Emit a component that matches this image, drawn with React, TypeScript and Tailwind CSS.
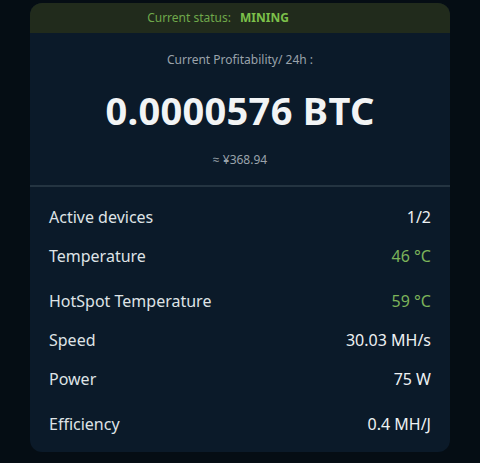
const rows = [
  { label: "Active devices", value: "1/2" },
  { label: "Temperature", value: "46 °C", green: true, groupEnd: true },
  { label: "HotSpot Temperature", value: "59 °C", green: true },
  { label: "Speed", value: "30.03 MH/s" },
  { label: "Power", value: "75 W", groupEnd: true },
  { label: "Efficiency", value: "0.4 MH/J" },
];

export default function App() {
  return (
    <div
      className="min-h-[463px] bg-[#050d14] px-[30px] pt-[3px]"
      style={{ fontFamily: '"Noto Sans", "Open Sans", sans-serif' }}
    >
      <div className="rounded-[12px] bg-[#0b1a29] overflow-hidden">
        {/* status bar */}
        <div className="h-[30px] bg-[#212b1c] flex items-center justify-center gap-[9px] pr-[44px] text-[12px]">
          <span className="text-[#6fa84b]">Current status:</span>
          <span className="text-[#7cc04a] font-bold">MINING</span>
        </div>

        {/* profitability */}
        <div className="h-[154px] border-b-2 border-[#243441] flex flex-col items-center">
          <div className="mt-[18px] text-[12px] text-[#9aa3ab]">Current Profitability/ 24h :</div>
          <div className="mt-[18px] text-[38px] leading-[46px] font-bold text-[#f2f4f5] tracking-[0.3px]">
            0.0000576 BTC
          </div>
          <div className="mt-[18px] text-[12px] text-[#9aa3ab]">≈ ¥368.94</div>
        </div>

        {/* stats */}
        <div className="px-[19px] pt-[10px] pb-[9px]">
          {rows.map((r) => (
            <div
              key={r.label}
              className={`h-[39px] flex items-center justify-between text-[16px] ${r.groupEnd ? "mb-[6px]" : ""}`}
            >
              <span className="text-[#dfe3e6]">{r.label}</span>
              <span className={r.green ? "text-[#7cb35a]" : "text-[#eef1f3]"}>{r.value}</span>
            </div>
          ))}
        </div>
      </div>
    </div>
  );
}
